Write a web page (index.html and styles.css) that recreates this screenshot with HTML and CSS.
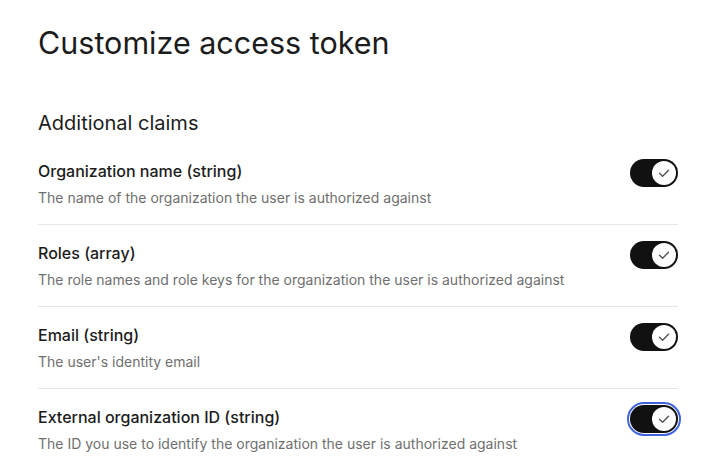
FILE: index.html
```html
<!DOCTYPE html>
<html lang="en">
<head>
    <meta charset="UTF-8">
    <meta name="viewport" content="width=device-width, initial-scale=1.0">
    <title>Customize access token</title>
    <link rel="stylesheet" href="styles.css">
</head>
<body>

<div class="page">
    <h1>Customize access token</h1>

    <h2>Additional claims</h2>

    <!-- Claims list -->
    <ul class="claims">
        <li class="claim">
            <div class="claim-text">
                <div class="claim-name">Organization name (string)</div>
                <div class="claim-desc">The name of the organization the user is authorized against</div>
            </div>
            <button class="switch" role="switch" aria-checked="true">
                <span class="knob">
                    <svg width="24" height="24" viewBox="0 0 24 24"><path d="M7.5 12.2 L10.6 15.2 L16.5 9.2" /></svg>
                </span>
            </button>
        </li>
        <li class="claim">
            <div class="claim-text">
                <div class="claim-name">Roles (array)</div>
                <div class="claim-desc">The role names and role keys for the organization the user is authorized against</div>
            </div>
            <button class="switch" role="switch" aria-checked="true">
                <span class="knob">
                    <svg width="24" height="24" viewBox="0 0 24 24"><path d="M7.5 12.2 L10.6 15.2 L16.5 9.2" /></svg>
                </span>
            </button>
        </li>
        <li class="claim">
            <div class="claim-text">
                <div class="claim-name">Email (string)</div>
                <div class="claim-desc">The user's identity email</div>
            </div>
            <button class="switch" role="switch" aria-checked="true">
                <span class="knob">
                    <svg width="24" height="24" viewBox="0 0 24 24"><path d="M7.5 12.2 L10.6 15.2 L16.5 9.2" /></svg>
                </span>
            </button>
        </li>
        <li class="claim">
            <div class="claim-text">
                <div class="claim-name">External organization ID (string)</div>
                <div class="claim-desc">The ID you use to identify the organization the user is authorized against</div>
            </div>
            <button class="switch focused" role="switch" aria-checked="true">
                <span class="knob">
                    <svg width="24" height="24" viewBox="0 0 24 24"><path d="M7.5 12.2 L10.6 15.2 L16.5 9.2" /></svg>
                </span>
            </button>
        </li>
    </ul>
</div>

</body>
</html>
```

FILE: styles.css
```css
body {
    margin: 0;
    background: #fff;
    font-family: Inter, "Noto Sans", Arial, sans-serif;
    color: #1c1c1c;
}
.page {
    padding: 26px 23px 0 38px;
}
h1 {
    margin: 0;
    font-size: 30.5px;
    line-height: 34px;
    font-weight: 400;
}
h2 {
    margin: 51px 0 0;
    font-size: 20px;
    line-height: 24px;
    font-weight: 400;
}
.claims {
    list-style: none;
    margin: 8px 0 0;
    padding: 0;
}
.claim {
    display: flex;
    justify-content: space-between;
    align-items: flex-start;
    padding: 16px 0;
    border-bottom: 1px solid #e6e6e6;
}
.claim:last-child {
    border-bottom: none;
}
.claim-name {
    font-size: 16px;
    line-height: 24px;
    font-weight: 500;
}
.claim-desc {
    margin-top: 5px;
    font-size: 14px;
    line-height: 20px;
    color: #6f6f6f;
}
.switch {
    flex-shrink: 0;
    display: flex;
    justify-content: flex-end;
    align-items: center;
    width: 48px;
    height: 28px;
    margin-top: 0;
    padding: 0 2px;
    border: none;
    border-radius: 14px;
    background: #111;
}
.switch.focused {
    outline: 2px solid #3e63dd;
    outline-offset: 1px;
}
.knob {
    display: block;
    width: 24px;
    height: 24px;
    border-radius: 50%;
    background: #fff;
}
.knob svg {
    display: block;
    fill: none;
    stroke: #555;
    stroke-width: 1.4;
    stroke-linecap: round;
    stroke-linejoin: round;
}
```
